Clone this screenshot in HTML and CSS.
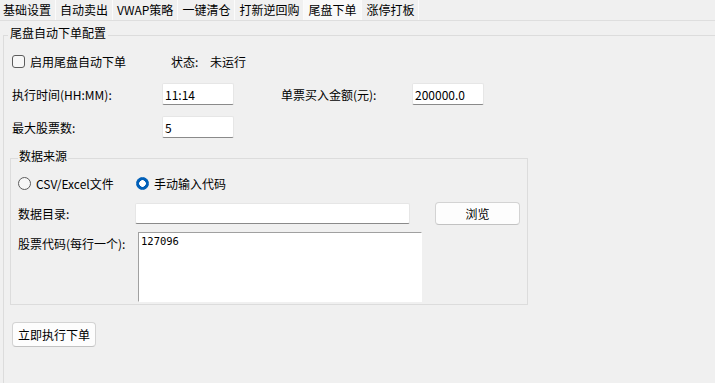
FILE: index.html
```html
<!DOCTYPE html>
<html lang="zh-CN">

<head>
  <meta charset="UTF-8">
  <meta name="viewport" content="width=device-width, initial-scale=1.0">
  <title>尾盘下单</title>
  <link rel="stylesheet" href="styles.css">
</head>

<body>

  <!-- Tabs -->
  <div class="tabs">
    <div class="tab">基础设置</div>
    <div class="tab">自动卖出</div>
    <div class="tab">VWAP策略</div>
    <div class="tab">一键清仓</div>
    <div class="tab">打新逆回购</div>
    <div class="tab active">尾盘下单</div>
    <div class="tab">涨停打板</div>
  </div>

  <!-- Tail order page -->
  <div class="pane">
    <fieldset class="group outer">
      <legend>尾盘自动下单配置</legend>

      <div class="status-row">
        <label class="check"><input type="checkbox">启用尾盘自动下单</label>
        <span class="status-label">状态:</span>
        <span>未运行</span>
      </div>

      <div class="form-grid">
        <label>执行时间(HH:MM):</label>
        <input class="field" type="text" value="11:14">
        <label class="second">单票买入金额(元):</label>
        <input class="field" type="text" value="200000.0">
        <label>最大股票数:</label>
        <input class="field" type="text" value="5">
      </div>

      <fieldset class="group inner">
        <legend>数据来源</legend>

        <div class="radio-row">
          <label class="radio first"><input type="radio" name="src">CSV/Excel文件</label>
          <label class="radio"><input type="radio" name="src" checked>手动输入代码</label>
        </div>

        <div class="dir-row">
          <label>数据目录:</label>
          <input class="field dir" type="text">
          <button class="btn browse">浏览</button>
        </div>

        <div class="codes-row">
          <label>股票代码(每行一个):</label>
          <textarea class="codes">127096</textarea>
        </div>
      </fieldset>

      <button class="btn run">立即执行下单</button>
    </fieldset>
  </div>

</body>

</html>
```

FILE: styles.css
```css
body {
  margin: 0;
  height: 100vh;
  background: #f0f0f0;
  font-family: "Noto Sans CJK SC", "Noto Sans", sans-serif;
  font-size: 12px;
  color: #000;
  overflow: hidden;
}

/* tab strip */
.tabs {
  display: flex;
  height: 20px;
  border-bottom: 1px solid #dedede;
}

.tab {
  padding: 0 4px 0 4px;
  line-height: 20px;
  border-right: 1px solid #fbfbfb;
  white-space: nowrap;
}

.tab:first-child {
  padding-left: 3px;
}

.tab.active {
  background: #f9f9f9;
  padding: 0 5px 0 4px;
}

.pane {
  padding-left: 3px;
}

/* group boxes */
.group {
  margin: 0;
  border: 1px solid #dcdcdc;
}

.group legend {
  margin-left: -2px;
  padding: 0 2px 4px;
  line-height: 16px;
}

.outer {
  margin-top: 4px;
  padding: 0 0 0 6px;
  border-right: none;
  border-bottom: none;
  min-height: 370px;
}

.status-row {
  display: flex;
  align-items: center;
  height: 22px;
  margin: 5px 0 0 2px;
}

.check {
  display: flex;
  align-items: center;
  width: 159px;
}

.check input {
  appearance: none;
  width: 13px;
  height: 13px;
  margin: 0 5px 0 0;
  border: 1px solid #5c5c5c;
  border-radius: 3px;
  background: #f7f7f7;
}

.status-label {
  width: 39px;
}

.form-grid {
  display: grid;
  grid-template-columns: 150px 72px 178px 72px;
  row-gap: 11px;
  align-items: center;
  margin: 11px 0 0 2px;
}

.form-grid .second {
  margin-left: 47px;
}

.field {
  box-sizing: border-box;
  height: 22px;
  margin: 0;
  padding: 0 2px;
  border: 1px solid #e6e6e6;
  border-bottom-color: #8a8a8a;
  border-radius: 2px;
  background: #fff;
  font-family: "Noto Sans CJK SC", "Noto Sans", sans-serif;
  font-size: 12px;
  color: #000;
}

.inner {
  width: 518px;
  box-sizing: border-box;
  margin-top: 10px;
  padding: 0 0 2px 7px;
}

.inner legend {
  margin-left: 0;
  padding: 0 1px 4px;
}

.radio-row {
  display: flex;
  align-items: center;
  height: 20px;
  margin-top: 5px;
}

.radio {
  display: flex;
  align-items: center;
}

.radio.first {
  width: 118px;
}

.radio input {
  appearance: none;
  width: 13px;
  height: 13px;
  margin: 0 5px 0 0;
  border: 1px solid #5c5c5c;
  border-radius: 50%;
  background: #f7f7f7;
}

.radio input:checked {
  border-color: #005fb8;
  background: radial-gradient(circle, #fff 0 3px, #005fb8 3.6px);
}

.dir-row {
  display: flex;
  align-items: center;
  height: 23px;
  margin-top: 9px;
}

.dir-row label {
  width: 117px;
}

.field.dir {
  width: 275px;
  height: 21px;
  margin-right: 25px;
}

.btn {
  box-sizing: border-box;
  margin: 0;
  padding: 0;
  border: 1px solid #d3d3d3;
  border-bottom-color: #c2c2c2;
  border-radius: 4px;
  background: #fdfdfd;
  font-family: "Noto Sans CJK SC", "Noto Sans", sans-serif;
  font-size: 12px;
  color: #000;
}

.browse {
  width: 85px;
  height: 23px;
}

.codes-row {
  display: flex;
  align-items: flex-start;
  margin-top: 7px;
}

.codes-row label {
  width: 120px;
  margin-top: 3px;
}

.codes {
  box-sizing: border-box;
  width: 284px;
  height: 70px;
  margin: 0;
  padding: 1px 2px;
  border: 1px solid #fff;
  border-top-color: #a0a0a0;
  border-left-color: #a0a0a0;
  resize: none;
  font-family: "DejaVu Sans Mono", monospace;
  font-size: 10.5px;
  line-height: 14px;
  color: #000;
}

.run {
  display: block;
  width: 84px;
  height: 25px;
  margin: 17px 0 0 2px;
}
```
